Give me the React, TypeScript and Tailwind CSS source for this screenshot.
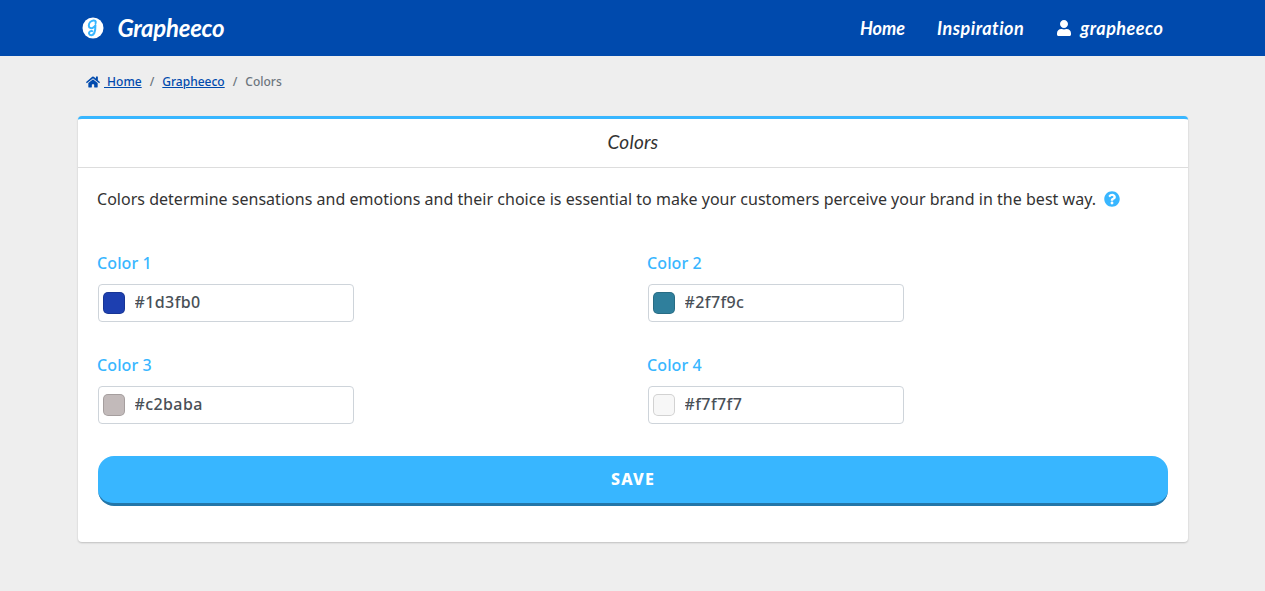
import React, { useState } from 'react';
import { FaHome, FaQuestionCircle, FaUser } from 'react-icons/fa';

interface ColorFieldProps {
  label: string;
  value: string;
  onChange: (value: string) => void;
}

function ColorField({ label, value, onChange }: ColorFieldProps) {
  return (
    <div className="h-[102px]">
      <label className="block">
        <span className="-ml-px block h-6 text-[16px] leading-6 font-medium tracking-[0.1px] text-[#38b6ff]">{label}</span>
        <span className="mt-[9px] flex h-[38px] w-[256px] items-center rounded border border-[#ced4da] bg-white pl-1">
          <span
            className="h-[22px] w-[22px] shrink-0 rounded-[5px] border border-black/15"
            style={{ backgroundColor: value }}
          />
          <input
            type="text"
            value={value}
            onChange={(e) => onChange(e.target.value)}
            className="ml-[9.5px] h-6 w-[200px] bg-transparent pb-[2px] text-[16px] font-medium tracking-[0.4px] text-[#495057] focus:outline-none"
          />
        </span>
      </label>
    </div>
  );
}

function Navbar() {
  return (
    <nav className="h-14 bg-[#004aad] font-['Lato',sans-serif] font-bold text-white italic">
      <div className="mx-auto flex h-full w-[1110px] items-center">
        <a href="#" className="flex items-center">
          <svg viewBox="0 0 22 22" className="ml-1 h-[22px] w-[22px]">
            <circle cx="11" cy="11" r="10.5" fill="#fff" />
            <path
              d="M13.6 6.2C14.2 4.2 13 3.3 11.4 3.5C8.8 3.8 6.8 6.2 6.8 8.7C6.8 11.4 9.8 11.8 11.6 10.2C12.4 9.5 13 8.8 13.4 8.2C13.5 11 13.2 13.8 12.3 16C11.2 18.7 7.6 18.9 7 16.6C6.7 14.8 8.8 13.6 10.2 14.2"
              fill="none"
              stroke="#38b6ff"
              strokeWidth="2"
              strokeLinecap="round"
              strokeLinejoin="round"
            />
          </svg>
          <span className="ml-[14px] text-[24px] leading-8 tracking-[-0.25px]">Grapheeco</span>
        </a>
        <div className="mr-6 ml-auto flex items-center pb-px text-[18px] leading-6">
          <a href="#">Home</a>
          <a href="#" className="ml-8 tracking-[0.5px]">Inspiration</a>
          <a href="#" className="ml-8 flex items-center tracking-[0.5px]">
            <FaUser className="mr-2 h-4 w-4" />
            grapheeco
          </a>
        </div>
      </div>
    </nav>
  );
}

function Breadcrumb() {
  return (
    <div className="flex h-[60px] items-center pb-2 pl-2 text-[12px] leading-5 font-medium text-[#6c757d]">
      <FaHome className="h-[14px] w-[14px] text-[#004aad]" />
      <a href="#" className="ml-1 whitespace-pre text-[#004aad] underline"> Home</a>
      <span className="mx-2">/</span>
      <a href="#" className="text-[#004aad] underline">Grapheeco</a>
      <span className="mx-2">/</span>
      <span>Colors</span>
    </div>
  );
}

export default function App() {
  const [colors, setColors] = useState(['#1d3fb0', '#2f7f9c', '#c2baba', '#f7f7f7']);

  const handleColorChange = (index: number, value: string) => {
    setColors(colors.map((color, i) => (i === index ? value : color)));
  };

  return (
    <div className="h-[591px] overflow-hidden bg-[#eeeeee] font-['Noto_Sans',sans-serif] text-[#333333]">
      <Navbar />
      <main className="ml-[78px] w-[1110px]">
        <Breadcrumb />

        <section className="h-[426px] rounded border-t-[3px] border-[#38b6ff] bg-white shadow-[0_1px_2px_rgba(0,0,0,0.2)]">
          <h1 className="h-[49px] border-b border-[#dddddd] text-center font-['Lato',sans-serif] text-[19px] leading-[46px] tracking-[0.2px] italic">
            Colors
          </h1>

          <div className="px-5 pt-[19px]">
            <p className="-ml-px flex h-6 items-center text-[16px] leading-6 tracking-[0.02px] whitespace-nowrap">
              <span>
                Colors determine sensations and emotions and their choice is essential to make your customers perceive your brand in the best way.
              </span>
              <FaQuestionCircle className="ml-2 h-4 w-4 text-[#38b6ff]" />
            </p>

            {/* Brand colors */}
            <div className="mt-10 grid grid-cols-2 gap-x-[30px]">
              {colors.map((color, index) => (
                <ColorField
                  key={index}
                  label={`Color ${index + 1}`}
                  value={color}
                  onChange={(value) => handleColorChange(index, value)}
                />
              ))}
            </div>

            <button
              type="button"
              className="mt-[1px] h-[50px] w-full rounded-[16px] border-b-[3px] border-[#2376a9] bg-[#38b6ff] pb-[2px] text-[16px] font-extrabold tracking-[1.2px] text-white"
            >
              SAVE
            </button>
          </div>
        </section>
      </main>
    </div>
  );
}
